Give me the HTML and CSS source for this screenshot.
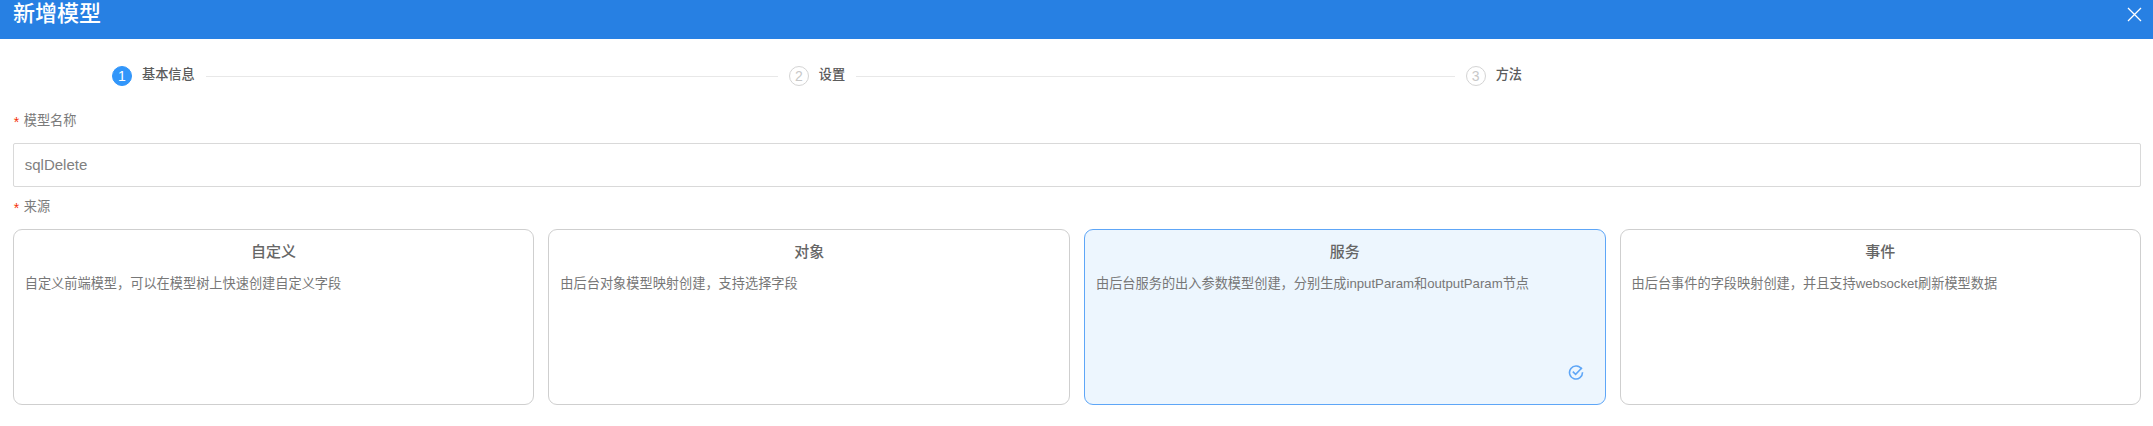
FILE: index.html
```html
<!DOCTYPE html>
<html lang="zh">
<head>
<meta charset="utf-8">
<title>新增模型</title>
<link rel="stylesheet" href="styles.css">
</head>
<body>
<header class="header">
  <h1 class="title">新增模型</h1>
  <button class="close" aria-label="关闭">
    <svg width="15" height="15" viewBox="0 0 15 15"><path d="M1 1 L14 14 M14 1 L1 14" stroke="#fff" stroke-width="1.3" fill="none"/></svg>
  </button>
</header>
<ol class="steps">
  <li class="step">
    <span class="num num-active">1</span><span class="step-text">基本信息</span><span class="line"></span>
  </li>
  <li class="step">
    <span class="num">2</span><span class="step-text">设置</span><span class="line"></span>
  </li>
  <li class="step step-last">
    <span class="num">3</span><span class="step-text">方法</span>
  </li>
</ol>
<main class="form">
  <label class="label"><span class="req">*</span>模型名称</label>
  <div class="input">sqlDelete</div>
  <label class="label label-second"><span class="req">*</span>来源</label>
  <div class="cards">
    <section class="card">
      <h2 class="card-title">自定义</h2>
      <p class="card-desc">自定义前端模型，可以在模型树上快速创建自定义字段</p>
    </section>
    <section class="card">
      <h2 class="card-title">对象</h2>
      <p class="card-desc">由后台对象模型映射创建，支持选择字段</p>
    </section>
    <section class="card card-selected">
      <h2 class="card-title">服务</h2>
      <p class="card-desc">由后台服务的出入参数模型创建，分别生成inputParam和outputParam节点</p>
      <svg class="check" width="16" height="16" viewBox="0 0 16 16" fill="none" stroke="#5ea6f7" stroke-width="1.6">
        <path d="M13.6 5.2 A6.5 6.5 0 1 0 14.5 8.2"/>
        <path d="M4.8 7.6 L7.6 10.3 L14 3.8"/>
      </svg>
    </section>
    <section class="card">
      <h2 class="card-title">事件</h2>
      <p class="card-desc">由后台事件的字段映射创建，并且支持websocket刷新模型数据</p>
    </section>
  </div>
</main>
</body>
</html>
```
FILE: styles.css
```css
* { box-sizing: border-box; }
html, body { margin: 0; padding: 0; background: #fff; }
body {
  height: 426px;
  overflow: hidden;
  font-family: "Liberation Sans", "Noto Sans CJK SC", sans-serif;
  color: #606266;
}
.header {
  height: 39px;
  background: #2780e3;
  display: flex;
  justify-content: space-between;
  align-items: flex-start;
  padding: 0 11px 0 13px;
}
.title {
  margin: 0;
  font-size: 22px;
  line-height: 28px;
  font-weight: 500;
  color: #fff;
}
.close {
  margin-top: 7px;
  padding: 0;
  border: 0;
  background: none;
  display: flex;
}
.steps {
  list-style: none;
  margin: 27px 0 0;
  padding: 0 631px 0 112px;
  display: grid;
  grid-template-columns: 1fr 1fr auto;
}
.step {
  display: flex;
  align-items: center;
  height: 20px;
}
.num {
  flex: none;
  width: 20px;
  height: 20px;
  border: 1px solid #d4d4d4;
  border-radius: 50%;
  display: flex;
  align-items: center;
  justify-content: center;
  font-size: 14px;
  color: #c8c8c8;
}
.num-active {
  background: #3296fa;
  border-color: #3296fa;
  color: #fff;
}
.step-text {
  margin-left: 10px;
  font-size: 13.2px;
  line-height: 18px;
  padding-bottom: 2px;
  font-weight: 500;
  color: #5c5c5c;
}
.line {
  flex: 1;
  height: 1px;
  margin: 0 11px;
  background: #e8e8e8;
}
.form { padding: 25px 11.85px 0 12.75px; }
.label {
  display: block;
  height: 20px;
  line-height: 20px;
  font-size: 13.2px;
  color: #7a7a7a;
  margin-bottom: 12px;
}
.label-second { margin-top: 10px; }
.req {
  display: inline-block;
  width: 11px;
  padding-left: 1px;
  color: #f5300a;
  font-size: 14px;
  vertical-align: -2px;
  line-height: 14px;
}
.input {
  height: 44px;
  border: 1px solid #d9d9d9;
  border-radius: 2px;
  padding: 0 11px;
  line-height: 42px;
  font-size: 15px;
  color: #808080;
}
.cards {
  display: grid;
  grid-template-columns: repeat(4, 1fr);
  gap: 14px;
}
.card {
  position: relative;
  height: 176px;
  border: 1px solid #cfcfcf;
  border-radius: 9px;
  padding: 12px 11px 0;
  background: #fff;
}
.card-selected {
  background: #edf6fe;
  border-color: #5ea6f7;
}
.card-title {
  margin: 0;
  font-size: 15px;
  line-height: 20px;
  font-weight: 500;
  text-align: center;
  color: #666;
}
.card-desc {
  margin: 12px 0 0;
  font-size: 13.2px;
  line-height: 20px;
  color: #777;
}
.check {
  position: absolute;
  right: 21px;
  bottom: 24px;
}
```
